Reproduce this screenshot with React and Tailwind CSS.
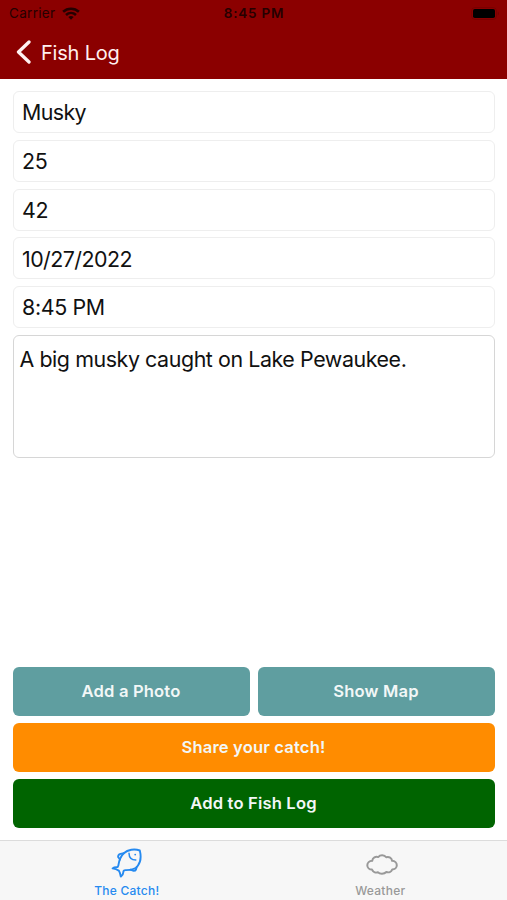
import React, { useState } from 'react';

const initialFields = [
  { name: 'species', label: 'Species', value: 'Musky', tracking: 'tracking-[-0.6px]' },
  { name: 'weight', label: 'Weight', value: '25', tracking: 'tracking-[-0.3px]' },
  { name: 'length', label: 'Length', value: '42', tracking: 'tracking-[-0.3px]' },
  { name: 'date', label: 'Date', value: '10/27/2022', tracking: 'tracking-[-0.55px]' },
  { name: 'time', label: 'Time', value: '8:45 PM', tracking: 'tracking-[-0.35px]' },
];

const StatusBar = () => (
  <div className="grid h-[27px] grid-cols-3 items-center pr-[8px] pl-[9px] text-black">
    <div className="flex items-center gap-[7px] text-[#250000]">
      <span className="text-[13.5px] tracking-[0.3px]">Carrier</span>
      <svg width="18" height="13" viewBox="0 0 18 13" fill="none" stroke="currentColor" strokeWidth="2.6">
        <path d="M1.1 4.8C5.6.7 12.4.7 16.9 4.8" />
        <path d="M4 8c2.9-2.6 7.1-2.6 10 0" />
        <path d="M6.3 9.9c1.6-1.3 3.8-1.3 5.4 0L9 12.7z" fill="currentColor" stroke="none" />
      </svg>
    </div>
    <span className="text-center text-[13.5px] font-semibold tracking-[0.8px] text-[#250000]">8:45 PM</span>
    <div className="flex items-center justify-end">
      <svg width="28" height="13" viewBox="0 0 28 13">
        <rect x="0.5" y="0.5" width="25" height="12" rx="3.5" fill="none" stroke="#000" strokeOpacity="0.12" />
        <rect x="2" y="2" width="22" height="9" rx="1.8" fill="#000" />
        <path d="M26.7 4.5v4c1-.4 1.3-1.2 1.3-2s-.3-1.6-1.3-2z" fill="#000" fillOpacity="0.15" />
      </svg>
    </div>
  </div>
);

const FishIcon = () => (
  <svg width="31" height="30" viewBox="0 0 31 30" fill="none" stroke="currentColor" strokeWidth="1.9" strokeLinejoin="round" strokeLinecap="round">
    {/* body and tail */}
    <path d="M28.8 2.500C23.500.6 16.800 1.600 12.800 5.300 9.200 8.700 8 13 7.300 17.600c-.2 1.200-.8 1.700-1.800 1.700-1.500 0-2.800.2-3.900 1.100 2.300.4 4.400 1.100 6.200 2.200 1.100 1.700 1.700 3.900 2 6 1.700-1.100 2.500-2.600 2.500-4.300 0-1.400.8-2.200 2.200-2.200 5 .1 9.600-.8 12.200-4.100 3-3.900 3.500-9.900 2.100-15.500z" />
    {/* fins */}
    <path d="M12.800 5.300L9.500 5.900C7.800 6.400 7 7.500 7.100 9l1.900 2.500" />
    <path d="M25.800 18.800l-.8 2.700c-.4.900-1.200 1.300-2.300 1.300l-3.400-1.100" />
    {/* gill and eye */}
    <path d="M18 5.200c.1 4.100 2.700 6.800 6.800 6.900" strokeWidth="1.5" />
    <circle cx="24.200" cy="6.600" r="0.9" fill="currentColor" stroke="none" />
  </svg>
);

const CloudIcon = () => (
  <svg width="32" height="22" viewBox="0 0 32 22" fill="none" stroke="currentColor" strokeWidth="2" strokeLinejoin="round">
    <path d="M6.200 6.800C6.600 3.700 9.700 2.100 12.200 3.100c2-2.400 6.200-2.400 8 .2 2.900-1 5.600.7 5.900 3.500 2.800.1 4.700 2.100 4.700 4.500s-2 4.200-4.600 4.300c-.9 2.300-3.500 3.300-5.900 2.400-2.200 2.300-6.400 2.300-8.400.3-2.500.8-5-.3-5.900-2.700-2.700-.1-4.700-2-4.700-4.400s2-4.300 4.900-4.400z" />
  </svg>
);

const App = () => {
  const [fields, setFields] = useState(initialFields);
  const [notes, setNotes] = useState('A big musky caught on Lake Pewaukee.');
  const [activeTab, setActiveTab] = useState('catch');

  const handleChange = (name, value) => {
    setFields(fields.map((field) => (field.name === name ? { ...field, value } : field)));
  };

  return (
    <div className="flex h-screen flex-col bg-white font-['Inter',sans-serif] text-[#111]">
      {/* Header */}
      <header className="h-[79px] shrink-0 bg-[#8b0000]">
        <StatusBar />
        <button className="flex h-[50px] items-center gap-[9px] pl-[16px] text-[20px] tracking-[-0.2px] text-[#fff0f0]">
          <svg width="16" height="24" viewBox="0 0 16 24" fill="none" stroke="currentColor" strokeWidth="3.3" strokeLinecap="round" strokeLinejoin="round">
            <path d="M13 2L2.500 12 13 22" />
          </svg>
          <span className="pt-px">Fish Log</span>
        </button>
      </header>

      {/* Catch details */}
      <main className="flex flex-1 flex-col px-[12.5px] py-[12px]">
        <div className="flex flex-col gap-[6.8px]">
          {fields.map((field) => (
            <input
              key={field.name}
              aria-label={field.label}
              value={field.value}
              onChange={(e) => handleChange(field.name, e.target.value)}
              className={`h-[42px] w-full rounded-md border border-[#eeeeee] px-[8.5px] pt-[0.5px] text-[21.4px] outline-none ${field.tracking}`}
            />
          ))}
          <textarea
            aria-label="Notes"
            value={notes}
            onChange={(e) => setNotes(e.target.value)}
            className="h-[123px] w-full resize-none rounded-md border border-[#d6d6d6] px-[6px] py-[7px] text-[21.4px] leading-[32px] tracking-[-0.42px] outline-none"
          />
        </div>

        {/* Actions */}
        <div className="mt-auto grid grid-cols-2 gap-x-[8px] gap-y-[7.25px] text-[16.6px] font-semibold tracking-[0.15px] text-[#f2f7f7]">
          <button className="h-[49px] rounded-md bg-[#5f9ea0] pt-px">Add a Photo</button>
          <button className="h-[49px] rounded-md bg-[#5f9ea0] pt-px">Show Map</button>
          <button className="col-span-2 h-[49px] rounded-md bg-[#ff8c00] pt-px">Share your catch!</button>
          <button className="col-span-2 h-[49px] rounded-md bg-[#006400]">Add to Fish Log</button>
        </div>
      </main>

      {/* Tab bar */}
      <nav className="grid h-[60px] shrink-0 grid-cols-2 border-t border-[#dcdcdc] bg-[#f7f7f7] text-[12px] font-medium tracking-[0.25px]">
        <button
          onClick={() => setActiveTab('catch')}
          className={`flex flex-col items-center pt-[7px] ${activeTab === 'catch' ? 'text-[#268af0]' : 'text-[#999]'}`}
        >
          <FishIcon />
          <span className="mt-[4px] leading-[18px]">The Catch!</span>
        </button>
        <button
          onClick={() => setActiveTab('weather')}
          className={`flex flex-col items-center pt-[13px] ${activeTab === 'weather' ? 'text-[#268af0]' : 'text-[#999]'}`}
        >
          <span className="pl-[3px]">
            <CloudIcon />
          </span>
          <span className="mt-[6px] leading-[18px]">Weather</span>
        </button>
      </nav>
    </div>
  );
};

export default App;
